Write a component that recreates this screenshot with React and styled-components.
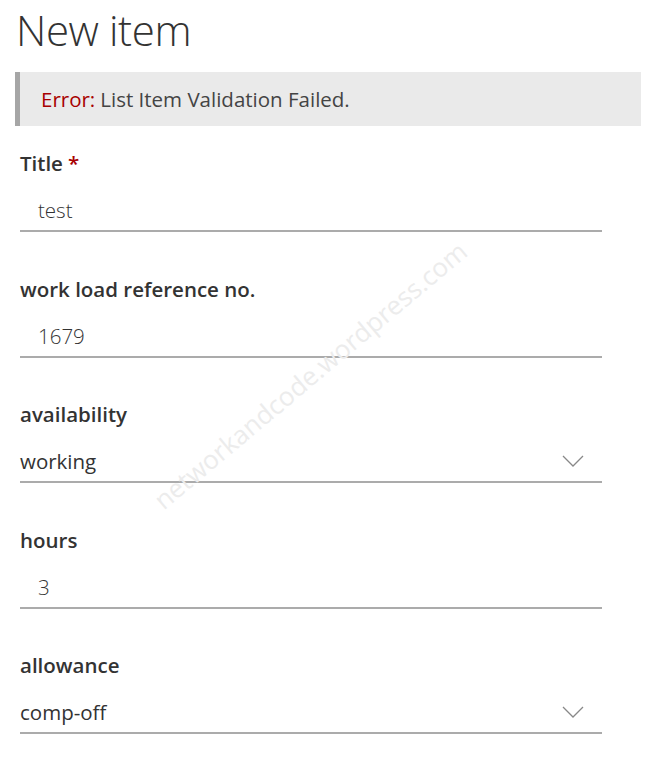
import React from "react";
import styled, { createGlobalStyle } from "styled-components";

const Global = createGlobalStyle`
  html, body { margin: 0; padding: 0; background: #fff; }
  body { font-family: "Open Sans", "Noto Sans", sans-serif; color: #333; }
`;

const Page = styled.div`
  position: relative;
  width: 660px;
  height: 757px;
  overflow: hidden;
  box-sizing: border-box;
  padding: 0 58px 0 15px;
`;

const Heading = styled.h1`
  margin: 0;
  padding: 3px 0 0 1px;
  font-size: 42px;
  font-weight: 300;
  line-height: 54px;
  color: #333;
  letter-spacing: -0.4px;
`;

const ErrorBar = styled.div`
  margin: 15px -39px 0 0;
  height: 54px;
  display: flex;
  align-items: center;
  background: #eaeaea;
  border-left: 5px solid #a6a6a6;
  padding-left: 21px;
  font-size: 20.5px;
  color: #444;
`;

const ErrorWord = styled.span`
  color: #a80000;
  margin-right: 5px;
`;

const Fields = styled.div`
  display: flex;
  flex-direction: column;
  padding-left: 5px;
  margin-top: 24px;
`;

const Field = styled.div`
  display: flex;
  flex-direction: column;
  height: 125.5px;
`;

const Label = styled.div`
  font-size: 20.5px;
  font-weight: 600;
  color: #333;
  line-height: 26px;
`;

const Star = styled.span`
  color: #a80000;
  margin-left: 5px;
`;

const Control = styled.div`
  margin-top: 14px;
  height: 40px;
  display: flex;
  align-items: center;
  justify-content: space-between;
  border-bottom: 2px solid #ababab;
  padding-left: ${(p) => (p.$select ? "0" : "18px")};
  padding-right: 18px;
  font-size: 20.5px;
  font-weight: ${(p) => (p.$select ? 400 : 300)};
  color: #333;
`;

const Chevron = styled.svg`
  width: 22px;
  height: 12px;
`;

const Watermark = styled.div`
  position: absolute;
  left: 310px;
  top: 375px;
  transform: translate(-50%, -50%) rotate(-40deg);
  font-size: 26px;
  color: #ececec;
  white-space: nowrap;
  pointer-events: none;
`;

const fields = [
  { label: "Title", required: true, value: "test" },
  { label: "work load reference no.", value: "1679" },
  { label: "availability", value: "working", select: true },
  { label: "hours", value: "3" },
  { label: "allowance", value: "comp-off", select: true },
];

export default function App() {
  return (
    <Page>
      <Global />
      <Heading>New item</Heading>
      <ErrorBar>
        <ErrorWord>Error:</ErrorWord>List Item Validation Failed.
      </ErrorBar>
      <Fields>
        {fields.map((f) => (
          <Field key={f.label}>
            <Label>
              {f.label}
              {f.required && <Star>*</Star>}
            </Label>
            <Control $select={f.select}>
              <span>{f.value}</span>
              {f.select && (
                <Chevron viewBox="0 0 22 12">
                  <path d="M1 1 L11 11 L21 1" fill="none" stroke="#888" strokeWidth="1.3" />
                </Chevron>
              )}
            </Control>
          </Field>
        ))}
      </Fields>
      <Watermark>networkandcode.wordpress.com</Watermark>
    </Page>
  );
}
